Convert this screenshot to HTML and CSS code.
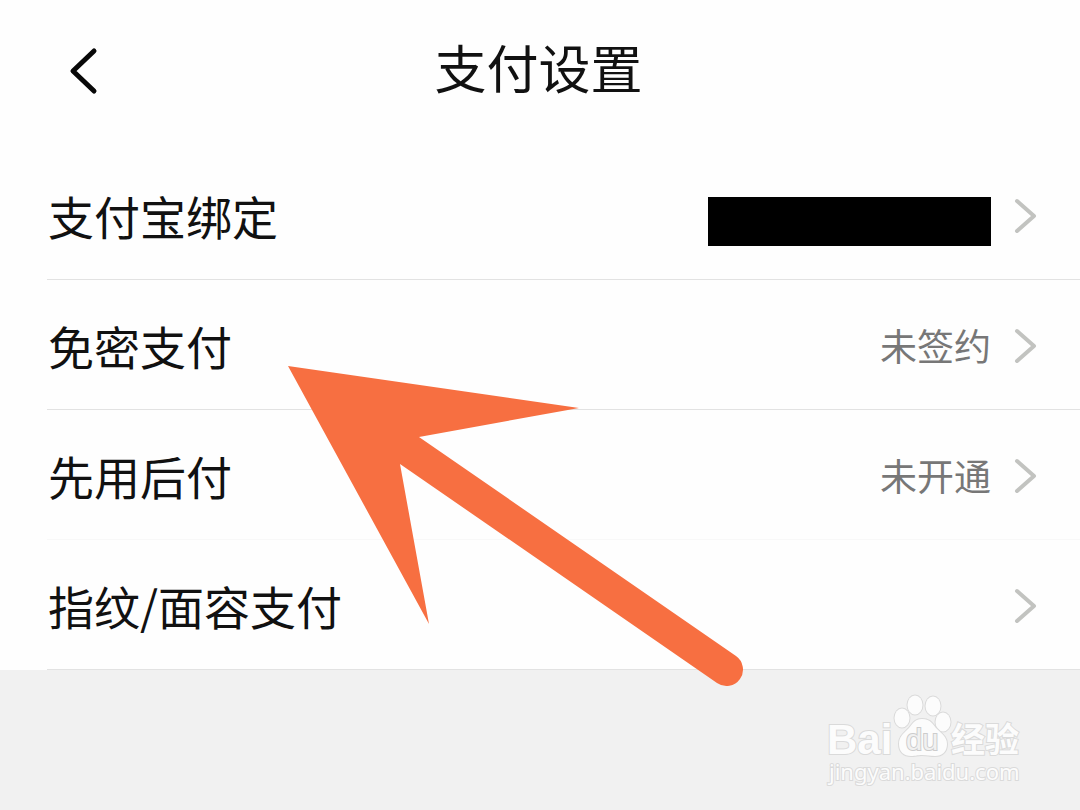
FILE: index.html
```html
<!DOCTYPE html>
<html lang="zh-CN">
<head>
    <meta charset="UTF-8">
    <meta name="viewport" content="width=device-width, initial-scale=1">
    <title>支付设置</title>
    <link rel="stylesheet" href="styles.css">
</head>
<body>
    <header class="header">
        <button class="back_btn" type="button" aria-label="返回">
            <svg width="32" height="48" viewBox="0 0 32 48">
                <path d="M27 4 L6 24 L27 44"/>
            </svg>
        </button>
        <h1 class="title">支付设置</h1>
    </header>

    <main class="list">
        <a class="row" href="#">
            <span class="label">支付宝绑定</span>
            <span class="hidden_account"></span>
            <svg class="chevron" width="24" height="36" viewBox="0 0 24 36"><path d="M4 4 L21 19 L4 34"/></svg>
        </a>
        <a class="row" href="#">
            <span class="label">免密支付</span>
            <span class="value">未签约</span>
            <svg class="chevron" width="24" height="36" viewBox="0 0 24 36"><path d="M4 4 L21 19 L4 34"/></svg>
        </a>
        <a class="row row_light" href="#">
            <span class="label">先用后付</span>
            <span class="value">未开通</span>
            <svg class="chevron" width="24" height="36" viewBox="0 0 24 36"><path d="M4 4 L21 19 L4 34"/></svg>
        </a>
        <a class="row" href="#">
            <span class="label">指纹/面容支付</span>
            <svg class="chevron" width="24" height="36" viewBox="0 0 24 36"><path d="M4 4 L21 19 L4 34"/></svg>
        </a>
    </main>

    <footer class="footer">
        <svg class="watermark" width="200" height="96" viewBox="0 0 200 96">
            <text class="wm_bai" x="-1" y="62">Bai</text>
            <g class="wm_paw">
                <ellipse cx="74" cy="26" rx="7.500" ry="9.500"/>
                <ellipse cx="87" cy="13" rx="7.500" ry="9.500"/>
                <ellipse cx="105" cy="14" rx="7.500" ry="9.500"/>
                <ellipse cx="115" cy="30" rx="7.500" ry="9.500"/>
                <path d="M94 27 C103 27 105 33 109 37 C114 42 119 45 119 52 C119 60 114 64 107 64 C102 64 99 63 94 63 C89 63 88 64 83 64 C76 64 71 60 71 52 C71 45 75 42 80 37 C84 33 86 27 94 27 Z"/>
            </g>
            <text class="wm_du" x="78" y="58">du</text>
            <text class="wm_cn" x="123" y="60">经验</text>
            <text class="wm_url" x="1" y="88">jingyan.baidu.com</text>
        </svg>
    </footer>

    <!-- pointer to the second row -->
    <svg class="arrow" width="456" height="322" viewBox="0 0 456 322" aria-hidden="true">
        <path d="M0 0 L291 42 L131 71 L448 290 A16.500 16.500 0 0 1 429 317 L112 98 L141 258 Z"/>
    </svg>
</body>
</html>
```
FILE: styles.css
```css
body {
    margin: 0;
    min-height: 100vh;
    display: flex;
    flex-direction: column;
    position: relative;
    background-color: #fefefe;
    color: #111111;
    font-family: "Noto Sans CJK SC", sans-serif;
}

/*  HEADER  */
.header {
    display: grid;
    grid-template-columns: 99px 1fr 102px;
    align-items: center;
    height: 141px;
    margin-bottom: 9px;
}
.back_btn {
    display: flex;
    justify-content: flex-end;
    padding: 0;
    border: none;
    background: none;
    cursor: pointer;
}
.back_btn path {
    fill: none;
    stroke: #080808;
    stroke-width: 5;
    stroke-linecap: round;
    stroke-linejoin: round;
}
.title {
    margin: 0;
    padding-bottom: 8px;
    text-align: center;
    font-size: 52px;
    line-height: 64px;
    font-weight: 400;
}

/*  LIST  */
.row {
    display: flex;
    align-items: center;
    height: 129px;
    margin-left: 47px;
    padding-left: 1px;
    padding-right: 43px;
    border-bottom: 1px solid #e2e2e2;
    color: inherit;
    text-decoration: none;
}
.row_light {
    border-bottom-color: #f8f8f8;
}
.label {
    flex: 1;
    font-size: 46px;
    line-height: 64px;
}
.value {
    font-size: 37px;
    line-height: 64px;
    color: #777777;
}
.hidden_account {
    width: 283px;
    height: 49px;
    margin-top: 14px;
    background-color: #000000;
}
.chevron {
    margin-left: 22px;
}
.chevron path {
    fill: none;
    stroke: #c2c3c0;
    stroke-width: 4;
    stroke-linecap: round;
    stroke-linejoin: round;
}

/*  FOOTER  */
.footer {
    flex: 1;
    display: flex;
    justify-content: flex-end;
    align-items: flex-start;
    padding: 22px 52px 0 0;
    background-color: #f1f1f1;
}
.watermark {
    overflow: visible;
}
.watermark text,
.wm_paw {
    fill: #fcfcfc;
    stroke: #dadada;
    stroke-width: 2;
    paint-order: stroke;
}
.watermark .wm_bai {
    font: bold 42px "Liberation Sans", sans-serif;
}
.watermark .wm_du {
    font: 29px "Liberation Sans", sans-serif;
    fill: #f1f1f1;
    stroke: #cccccc;
}
.watermark .wm_cn {
    font: bold 34px "Noto Sans CJK SC", sans-serif;
}
.watermark .wm_url {
    font: 22px "Noto Sans", sans-serif;
}

/*  ARROW  */
.arrow {
    position: absolute;
    top: 366px;
    left: 288px;
    pointer-events: none;
}
.arrow path {
    fill: #f76f41;
}
```
